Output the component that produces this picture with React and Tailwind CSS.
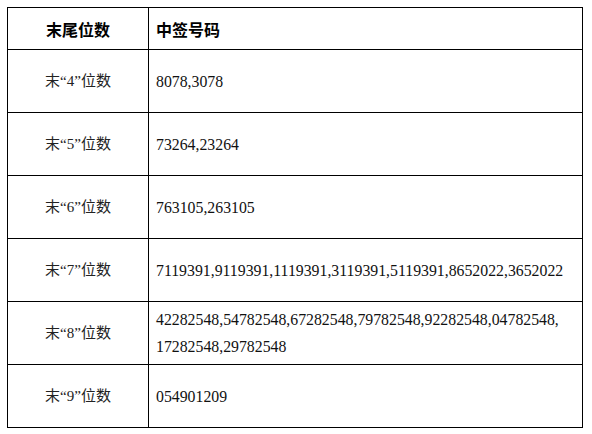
import React from 'react';

const rows = [
  { k: '4', v: ['8078,3078'] },
  { k: '5', v: ['73264,23264'] },
  { k: '6', v: ['763105,263105'] },
  { k: '7', v: ['7119391,9119391,1119391,3119391,5119391,8652022,3652022'] },
  { k: '8', v: ['42282548,54782548,67282548,79782548,92282548,04782548,', '17282548,29782548'] },
  { k: '9', v: ['054901209'] },
];

export default function App() {
  return (
    <div className="w-[592px] h-[434px] bg-white pt-[7px] pl-[7px]" style={{ fontFamily: '"Liberation Serif", "Noto Sans CJK SC", serif' }}>
      <table className="border-collapse w-[576px] text-black">
        <thead>
          <tr className="h-[42px]">
            <th className="w-[141px] border border-black text-center text-[16px] font-bold" style={{ fontFamily: '"Noto Sans CJK SC", sans-serif' }}>末尾位数</th>
            <th className="border border-black text-left pl-[7px] text-[16px] font-bold" style={{ fontFamily: '"Noto Sans CJK SC", sans-serif' }}>中签号码</th>
          </tr>
        </thead>
        <tbody>
          {rows.map((r) => (
            <tr key={r.k} className="h-[63px]">
              <td className="border border-black text-center text-[15px] text-[#222]">
                末“{r.k}”位数
              </td>
              <td className="border border-black pl-[7px] text-[15.8px] leading-[27px] text-[#111]">
                {r.v.map((line) => (
                  <div key={line} className="whitespace-nowrap">{line}</div>
                ))}
              </td>
            </tr>
          ))}
        </tbody>
      </table>
    </div>
  );
}
